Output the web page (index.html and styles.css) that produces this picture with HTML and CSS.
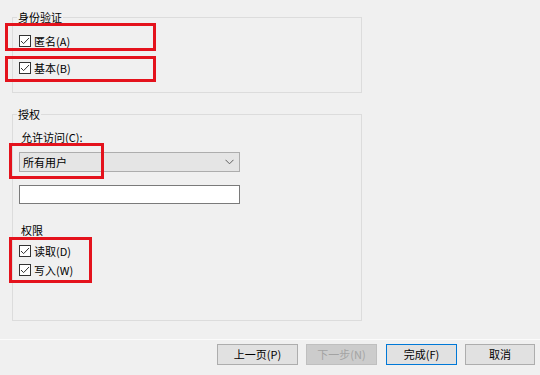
FILE: index.html
```html
<!DOCTYPE html>
<html>
<head>
<meta charset="utf-8">
<link rel="stylesheet" href="styles.css">
</head>
<body>
<div class="page">
  <fieldset class="group g1">
    <legend>身份验证</legend>
    <div class="check"><span class="box"><svg width="12" height="12" viewBox="0 0 12 12"><polyline points="2,6 4.6,8.6 10,3" fill="none" stroke="#333" stroke-width="1"/></svg></span><span>匿名(A)</span></div>
    <div class="check second"><span class="box"><svg width="12" height="12" viewBox="0 0 12 12"><polyline points="2,6 4.6,8.6 10,3" fill="none" stroke="#333" stroke-width="1"/></svg></span><span>基本(B)</span></div>
  </fieldset>

  <fieldset class="group g2">
    <legend>授权</legend>
    <div class="label">允许访问(C):</div>
    <div class="combo"><span>所有用户</span><svg width="9" height="6" viewBox="0 0 9 6"><polyline points="0.5,0.8 4.5,4.8 8.5,0.8" fill="none" stroke="#606060" stroke-width="1"/></svg></div>
    <div class="textbox"></div>
    <div class="label perm">权限</div>
    <div class="check read"><span class="box"><svg width="12" height="12" viewBox="0 0 12 12"><polyline points="2,6 4.6,8.6 10,3" fill="none" stroke="#333" stroke-width="1"/></svg></span><span>读取(D)</span></div>
    <div class="check write"><span class="box"><svg width="12" height="12" viewBox="0 0 12 12"><polyline points="2,6 4.6,8.6 10,3" fill="none" stroke="#333" stroke-width="1"/></svg></span><span>写入(W)</span></div>
  </fieldset>

  <div class="sep"></div>

  <div class="buttons">
    <div class="btn prev">上一页(P)</div>
    <div class="btn next disabled">下一步(N)</div>
    <div class="btn finish default">完成(F)</div>
    <div class="btn cancel">取消</div>
  </div>

  <div class="mark m1"></div>
  <div class="mark m2"></div>
  <div class="mark m3"></div>
  <div class="mark m4"></div>
</div>
</body>
</html>
```

FILE: styles.css
```css
html, body {
  margin: 0;
  padding: 0;
  background: #f0f0f0;
}
body {
  width: 540px;
  height: 375px;
  overflow: hidden;
  font-family: "Noto Sans CJK SC", "Liberation Sans", sans-serif;
  font-size: 11px;
  color: #000;
}
.page {
  position: relative;
  width: 540px;
  height: 375px;
  padding-top: 10px;
  box-sizing: border-box;
}
.group {
  box-sizing: border-box;
  width: 350px;
  margin: 0 0 0 12px;
  padding: 0 0 0 6px;
  border: 1px solid #dcdcdc;
  min-width: 0;
}
.group legend {
  padding: 0 1px;
  margin-left: -2px;
  height: 14px;
  line-height: 14px;
}
.g1 {
  padding-top: 10px;
  padding-bottom: 17px;
}
.g2 {
  margin-top: 14px;
  padding-top: 9px;
  padding-bottom: 43px;
}
.check {
  display: flex;
  align-items: center;
  height: 14px;
  line-height: 14px;
}
.check .box {
  box-sizing: border-box;
  width: 12px;
  height: 12px;
  border: 1px solid #333;
  background: #fff;
  margin-right: 3px;
  display: flex;
}
.check .box svg {
  margin: -1px;
}
.check.second { margin-top: 13px; }
.label {
  height: 14px;
  line-height: 14px;
  margin-left: 2px;
}
.combo {
  box-sizing: border-box;
  width: 221px;
  height: 20px;
  margin-top: 8px;
  background: #e5e5e5;
  border: 1px solid #adadad;
  display: flex;
  align-items: center;
  justify-content: space-between;
  padding: 0 5px 0 3px;
  line-height: 14px;
}
.textbox {
  box-sizing: border-box;
  width: 221px;
  height: 19px;
  margin-top: 13px;
  background: #fff;
  border: 1px solid #7a7a7a;
}
.label.perm { margin-top: 19px; }
.check.read { margin-top: 7px; }
.check.write { margin-top: 5px; }
.sep {
  height: 1px;
  background: #fbfbfb;
  margin-top: 18px;
}
.buttons {
  display: flex;
  justify-content: flex-end;
  padding-right: 5px;
  margin-top: 4px;
}
.btn {
  box-sizing: border-box;
  height: 21px;
  line-height: 19px;
  text-align: center;
  background: #e1e1e1;
  border: 1px solid #adadad;
}
.btn.prev { width: 81px; }
.btn.next { width: 71px; margin-left: 8px; }
.btn.finish { width: 71px; margin-left: 9px; }
.btn.cancel { width: 70px; margin-left: 8px; }
.btn.disabled {
  background: #cccccc;
  border-color: #bfbfbf;
  color: #a3a3a3;
}
.btn.default {
  border-color: #0078d7;
}
.mark {
  position: absolute;
  box-sizing: border-box;
  border: 3px solid #e4121c;
}
.m1 { left: 5px; top: 23px; width: 151px; height: 28px; }
.m2 { left: 5px; top: 56px; width: 151px; height: 26px; }
.m3 { left: 9px; top: 143px; width: 95px; height: 36px; }
.m4 { left: 9px; top: 237px; width: 83px; height: 46px; }
```
